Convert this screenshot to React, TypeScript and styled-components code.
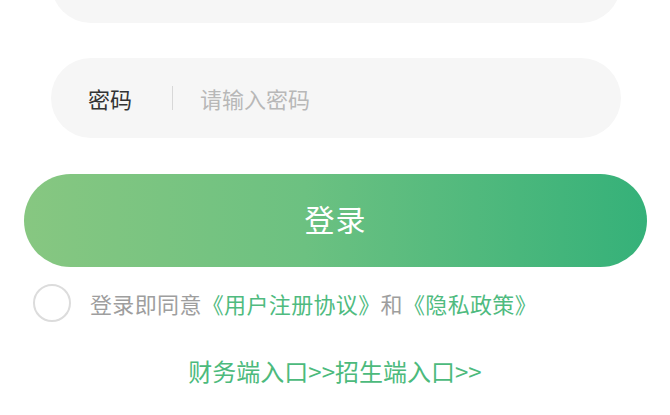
import React from "react";
import styled, { createGlobalStyle } from "styled-components";

const GlobalStyle = createGlobalStyle`
  html, body {
    margin: 0;
    padding: 0;
    background: #ffffff;
    overflow: hidden;
  }
  body {
    font-family: "Noto Sans CJK SC", "Noto Sans", sans-serif;
  }
  * { box-sizing: border-box; }
`;

const Page = styled.div`
  display: flex;
  flex-direction: column;
  margin-top: -57px;
  width: 670px;
`;

const Fields = styled.div`
  display: flex;
  flex-direction: column;
  gap: 35px;
  padding: 0 49px 0 51px;
`;

const Field = styled.div`
  display: flex;
  align-items: center;
  height: 80px;
  border-radius: 40px;
  background: #f6f6f6;
  padding-left: 37px;
`;

const Label = styled.span`
  width: 84px;
  font-size: 22px;
  line-height: 1;
  color: #333333;
`;

const Divider = styled.span`
  width: 1px;
  height: 24px;
  background: #d8d8d8;
  margin-right: 27px;
`;

const Input = styled.input`
  flex: 1;
  height: 30px;
  border: none;
  outline: none;
  background: transparent;
  font-family: inherit;
  font-size: 22px;
  color: #333333;
  padding: 0;
  &::placeholder {
    color: #b8b8b8;
  }
`;

const LoginButton = styled.button`
  margin: 36px 23px 0 24px;
  height: 93px;
  border: none;
  border-radius: 47px;
  background: linear-gradient(90deg, #87c781 0%, #6cc181 45%, #35b179 100%);
  color: #ffffff;
  font-family: inherit;
  font-size: 30px;
  letter-spacing: 1px;
  display: flex;
  align-items: center;
  justify-content: center;
  padding-bottom: 6px;
`;

const AgreeRow = styled.div`
  display: flex;
  align-items: center;
  gap: 19px;
  margin-top: 17px;
  padding-left: 33px;
`;

const Circle = styled.span`
  width: 38px;
  height: 38px;
  border-radius: 50%;
  border: 2px solid #dcdcdc;
  flex-shrink: 0;
`;

const AgreeText = styled.span`
  font-size: 22px;
  line-height: 30px;
  letter-spacing: 0.35px;
  color: #9e9e9e;
  white-space: nowrap;
`;

const Link = styled.span`
  color: #4fbb7f;
`;

const Entrances = styled.div`
  margin-top: 31px;
  text-align: center;
  font-size: 24px;
  line-height: 36px;
  color: #4cba7c;
`;

export default function App() {
  return (
    <>
      <GlobalStyle />
      <Page>
        <Fields>
          <Field>
            <Label>手机号</Label>
            <Divider />
            <Input placeholder="请输入手机号" />
          </Field>
          <Field>
            <Label>密码</Label>
            <Divider />
            <Input type="password" placeholder="请输入密码" />
          </Field>
        </Fields>
        <LoginButton>登录</LoginButton>
        <AgreeRow>
          <Circle />
          <AgreeText>
            登录即同意<Link>《用户注册协议》</Link>和<Link>《隐私政策》</Link>
          </AgreeText>
        </AgreeRow>
        <Entrances>财务端入口&gt;&gt;招生端入口&gt;&gt;</Entrances>
      </Page>
    </>
  );
}
